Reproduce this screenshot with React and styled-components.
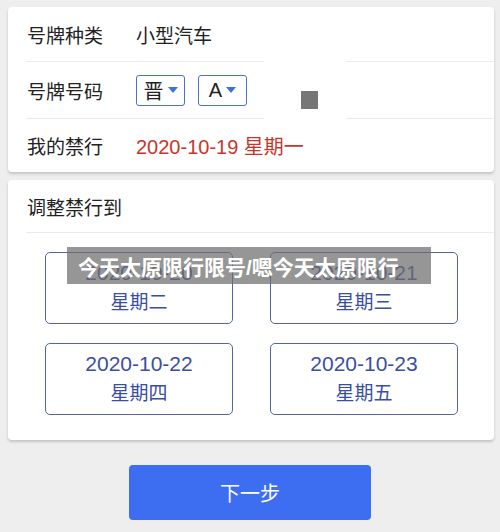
import React from "react";
import styled, { createGlobalStyle } from "styled-components";

const GlobalStyle = createGlobalStyle`
  html, body {
    margin: 0;
    padding: 0;
    background: #eeeeee;
    font-family: "Liberation Sans", "Noto Sans CJK SC", sans-serif;
  }
`;

const Page = styled.div`
  width: 500px;
  height: 532px;
  box-sizing: border-box;
  padding: 7px 6px 0 8px;
  display: flex;
  flex-direction: column;
  gap: 8px;
  position: relative;
  overflow: hidden;
`;

const Card = styled.div`
  background: #fff;
  border-radius: 4px;
  box-shadow: 0 2px 3px rgba(0, 0, 0, 0.18);
  position: relative;
`;

const Row = styled.div`
  height: ${(p) => p.$h || 56}px;
  box-sizing: border-box;
  margin-left: 18px;
  display: flex;
  align-items: center;
  border-top: ${(p) => (p.$first ? "none" : "1px solid #ebebeb")};
  font-size: 19px;
  color: #222;
`;

const Label = styled.span`
  width: 109px;
  flex-shrink: 0;
  padding-left: 1px;
`;

const Value = styled.span`
  color: ${(p) => p.$color || "#222"};
  font-size: ${(p) => p.$size || 19}px;
`;

const Selects = styled.div`
  display: flex;
  gap: 13px;
`;

const Select = styled.div`
  height: 31px;
  width: 49px;
  box-sizing: border-box;
  border: 1px solid #4a72c8;
  border-radius: 3px;
  display: flex;
  align-items: center;
  justify-content: center;
  gap: 4px;
  font-size: 20px;
  color: #222;
`;

const Caret = styled.span`
  width: 0;
  height: 0;
  border-left: 5px solid transparent;
  border-right: 5px solid transparent;
  border-top: 6px solid #3b72e0;
`;

const Patch = styled.div`
  position: absolute;
  left: 256px;
  top: 52px;
  width: 82px;
  height: 60px;
  background: #fff;
`;

const Square = styled.div`
  position: absolute;
  left: 293px;
  top: 84px;
  width: 17px;
  height: 18px;
  background: #767676;
`;

const Title = styled.div`
  height: 53px;
  box-sizing: border-box;
  margin-left: 18px;
  display: flex;
  align-items: center;
  font-size: 19px;
  color: #222;
  border-bottom: 1px solid #ebebeb;
  padding-left: 1px;
`;

const Grid = styled.div`
  display: grid;
  grid-template-columns: 188px 188px;
  column-gap: 37px;
  row-gap: 19px;
  padding: 19px 0 25px 37px;
`;

const DayButton = styled.div`
  height: 72px;
  box-sizing: border-box;
  border: 1.5px solid #5364ad;
  border-radius: 5px;
  display: flex;
  flex-direction: column;
  align-items: center;
  justify-content: center;
  color: #3a4ea3;
  line-height: 30px;
`;

const DateText = styled.span`
  font-size: 21px;
`;

const WeekText = styled.span`
  font-size: 19px;
`;

const Watermark = styled.div`
  position: absolute;
  left: 67px;
  top: 247px;
  width: 364px;
  height: 37px;
  background: rgba(110, 110, 110, 0.72);
  color: #fff;
  font-weight: bold;
  font-size: 21px;
  display: flex;
  align-items: center;
  padding-left: 11px;
  box-sizing: border-box;
  white-space: nowrap;
`;

const Footer = styled.div`
  display: flex;
  justify-content: center;
  padding-top: 17px;
  padding-right: 2px;
`;

const NextButton = styled.button`
  width: 242px;
  height: 55px;
  border: none;
  border-radius: 4px;
  background: #3d6ef2;
  color: #fff;
  font-family: inherit;
  font-size: 20px;
`;

export default function App() {
  return (
    <>
      <GlobalStyle />
      <Page>
        <Card>
          <Row $first $h={54}>
            <Label>号牌种类</Label>
            <Value>小型汽车</Value>
          </Row>
          <Row $h={57}>
            <Label>号牌号码</Label>
            <Selects>
              <Select>
                晋<Caret />
              </Select>
              <Select>
                A<Caret />
              </Select>
            </Selects>
          </Row>
          <Row $h={54}>
            <Label>我的禁行</Label>
            <Value $color="#c8362b" $size={20}>
              2020-10-19 星期一
            </Value>
          </Row>
          <Patch />
          <Square />
        </Card>
        <Card>
          <Title>调整禁行到</Title>
          <Grid>
            <DayButton>
              <DateText>2020-10-20</DateText>
              <WeekText>星期二</WeekText>
            </DayButton>
            <DayButton>
              <DateText>2020-10-21</DateText>
              <WeekText>星期三</WeekText>
            </DayButton>
            <DayButton>
              <DateText>2020-10-22</DateText>
              <WeekText>星期四</WeekText>
            </DayButton>
            <DayButton>
              <DateText>2020-10-23</DateText>
              <WeekText>星期五</WeekText>
            </DayButton>
          </Grid>
        </Card>
        <Footer>
          <NextButton>下一步</NextButton>
        </Footer>
        <Watermark>今天太原限行限号/嗯今天太原限行</Watermark>
      </Page>
    </>
  );
}
